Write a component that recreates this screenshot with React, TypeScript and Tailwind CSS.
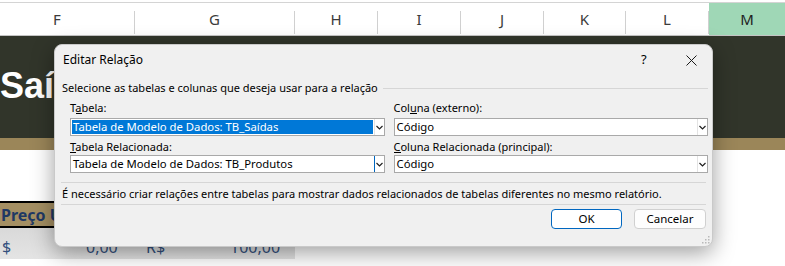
import React from 'react';

const columns = [
  { letter: 'F', width: 'w-[135px]', extra: 'pr-[20px]' },
  { letter: 'G', width: 'w-[160px]', extra: '' },
  { letter: 'H', width: 'w-[83px]', extra: '' },
  { letter: 'I', width: 'w-[83px]', extra: '' },
  { letter: 'J', width: 'w-[83px]', extra: '' },
  { letter: 'K', width: 'w-[82px]', extra: '' },
  { letter: 'L', width: 'w-[83px]', extra: '' },
];

const Chevron = () => (
  <svg width="7" height="5" viewBox="0 0 7 5" className="block">
    <path d="M0.5 1 L3.5 4 L6.5 1" fill="none" stroke="#202020" strokeWidth="1.2" />
  </svg>
);

type SelectProps = {
  value: string;
  selected?: boolean;
  focused?: boolean;
};

const Select = ({ value, selected, focused }: SelectProps) => (
  <div className="flex h-[18px] border border-[#a9a9a9] bg-white">
    <div className="flex flex-1 p-px">
      <div
        className={
          selected
            ? 'flex flex-1 items-center bg-[#0078d7] pl-[1px] text-[11.3px] text-white'
            : 'flex flex-1 items-center pl-[1px] text-[11.3px] text-black'
        }
      >
        {value}
      </div>
    </div>
    <div
      className={
        focused
          ? 'flex w-[10px] items-center justify-center border-l border-[#0067c0]'
          : 'flex w-[10px] items-center justify-center border-l border-[#e3e3e3]'
      }
    >
      <Chevron />
    </div>
  </div>
);

const Grip = () => (
  <svg width="8" height="8" viewBox="0 0 8 8" className="absolute bottom-[2px] right-[2px]">
    <rect x="6" y="0" width="1.5" height="1.5" fill="#b9b9b9" />
    <rect x="3" y="3" width="1.5" height="1.5" fill="#b9b9b9" />
    <rect x="6" y="3" width="1.5" height="1.5" fill="#b9b9b9" />
    <rect x="0" y="6" width="1.5" height="1.5" fill="#b9b9b9" />
    <rect x="3" y="6" width="1.5" height="1.5" fill="#b9b9b9" />
    <rect x="6" y="6" width="1.5" height="1.5" fill="#b9b9b9" />
  </svg>
);

export default function App() {
  return (
    <div className="relative h-[266px] w-[785px] overflow-hidden bg-white font-['Noto_Sans',sans-serif]">
      {/* column header strip */}
      <div className="h-[3px] border-b border-[#d4d4d4]" />
      <div className="flex h-[33px] border-b border-[#c4c4c4] bg-white text-[15px] text-[#3b3b3b]">
        {columns.map((c) => (
          <div key={c.letter} className={`flex ${c.width} items-end`}>
            <div className={`flex h-full flex-1 items-center justify-center ${c.extra}`}>{c.letter}</div>
            <div className="mb-[1px] h-[23px] w-px bg-[#d0d0d0]" />
          </div>
        ))}
        <div className="flex flex-1 items-center justify-center bg-[#9fd7b6] text-[#1e1e1e]">M</div>
      </div>

      {/* sheet title band (only the part left of the dialog shows) */}
      <div className="flex h-[102px] items-start bg-[#31352a] pt-[32px]">
        <div className="w-[54px] overflow-hidden whitespace-nowrap">
          <span className="font-['Liberation_Sans',sans-serif] text-[36px] font-bold leading-none text-white">
            Saídas
          </span>
        </div>
      </div>
      <div className="h-[12px] bg-[#9b8659]" />
      <div className="h-[51px] bg-white" />

      {/* table */}
      <div className="w-[295px]">
        <div className="h-[2px] bg-black" />
        <div className="flex h-[23px] items-center bg-[#a48f63] pl-[1px] text-[16px] font-bold text-[#1f3864]">
          <div className="w-[53px] overflow-hidden whitespace-nowrap">Preço Unitário</div>
        </div>
        <div className="h-[2px] bg-black" />
        <div className="flex h-[31px] items-center bg-gradient-to-b from-[#d9d9d9] to-[#e4e4e4] pt-[6px] text-[16px] text-[#33507d]">
          <span className="w-[86px] pl-[2px]">$</span>
          <span className="w-[60px]">0,00</span>
          <span className="w-[84px]">R$</span>
          <span>100,00</span>
        </div>
      </div>

      {/* dialog */}
      <div className="absolute left-[54px] top-[44px] h-[203px] w-[659px] rounded-[8px] border border-[#c9c9c9] bg-[#f0f0f0] text-[11px] text-black shadow-[0_6px_22px_rgba(0,0,0,0.38)]">
        <div className="flex h-[30px] items-center pl-[8px] text-[12px]">
          <span className="flex-1">Editar Relação</span>
          <span className="w-[45px] text-[13px]">?</span>
          <svg width="11" height="11" viewBox="0 0 11 11" className="mr-[15px]">
            <path d="M0.5 0.5 L10.5 10.5 M10.5 0.5 L0.5 10.5" stroke="#1a1a1a" strokeWidth="1" />
          </svg>
        </div>

        <div className="flex h-[26px] items-center pl-[7px] pr-[4px]">
          <span>Selecione as tabelas e colunas que deseja usar para a relação</span>
          <div className="ml-[5px] h-px flex-1 bg-[#d6d6d6]" />
        </div>

        {/* access-key underlines are drawn as a 1px background stripe under the letter */}
        <div className="grid grid-cols-2 gap-x-[9px] pl-[15px] pr-[4px]">
          <div className="flex flex-col">
            <div className="flex h-[14px] items-center">
              <span className="inline-block bg-[linear-gradient(#000,#000)] bg-[length:6px_1px] bg-[position:6px_12px] bg-no-repeat leading-[14px]">
                Tabela:
              </span>
            </div>
            <div className="mt-[3px]">
              <Select value="Tabela de Modelo de Dados: TB_Saídas" selected />
            </div>
            <div className="mt-[4px] flex h-[14px] items-center">
              <span className="inline-block bg-[linear-gradient(#000,#000)] bg-[length:6px_1px] bg-[position:0px_12px] bg-no-repeat leading-[14px]">
                Tabela Relacionada:
              </span>
            </div>
            <div className="mt-px">
              <Select value="Tabela de Modelo de Dados: TB_Produtos" focused />
            </div>
          </div>
          <div className="flex flex-col">
            <div className="flex h-[14px] items-center">
              <span className="inline-block bg-[linear-gradient(#000,#000)] bg-[length:7px_1px] bg-[position:16px_12px] bg-no-repeat leading-[14px]">
                Coluna (externo):
              </span>
            </div>
            <div className="mt-[3px]">
              <Select value="Código" />
            </div>
            <div className="mt-[4px] flex h-[14px] items-center">
              <span className="inline-block bg-[linear-gradient(#000,#000)] bg-[length:7px_1px] bg-[position:0px_12px] bg-no-repeat leading-[14px]">
                Coluna Relacionada (principal):
              </span>
            </div>
            <div className="mt-px">
              <Select value="Código" />
            </div>
          </div>
        </div>

        <div className="mx-[6px] mt-[9px] h-px bg-[#d6d6d6]" />
        <div className="flex h-[21px] items-center whitespace-nowrap pl-[7px] pt-px">
          É necessário criar relações entre tabelas para mostrar dados relacionados de tabelas diferentes no mesmo relatório.
        </div>
        <div className="mx-[6px] h-px bg-[#d6d6d6]" />

        <div className="mt-[4px] flex justify-end gap-[12px] pr-[6px] text-[11.5px]">
          <button className="flex h-[20px] w-[71px] items-center justify-center rounded-[4px] border border-[#0067c0] bg-white">
            OK
          </button>
          <button className="flex h-[20px] w-[72px] items-center justify-center rounded-[4px] border border-[#d0d0d0] bg-[#fdfdfd]">
            Cancelar
          </button>
        </div>
        <Grip />
      </div>
    </div>
  );
}
